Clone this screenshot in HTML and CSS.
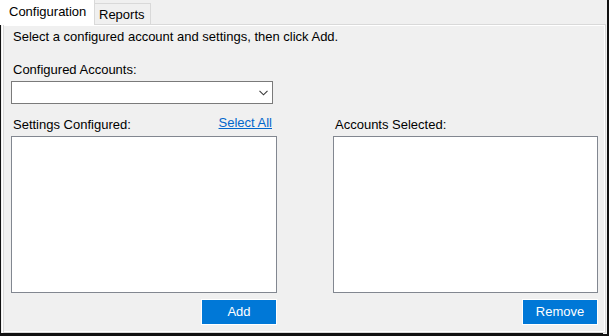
FILE: index.html
```html
<!DOCTYPE html>
<html>
<head>
<meta charset="utf-8">
<link rel="stylesheet" href="styles.css">
</head>
<body>
<div class="window">
  <div class="tabs">
    <div class="tab active">Configuration</div>
    <div class="tab">Reports</div>
  </div>
  <div class="panel">
    <div class="intro">Select a configured account and settings, then click Add.</div>
    <div class="label accounts-label">Configured Accounts:</div>
    <div class="combo">
      <svg class="chevron" width="9" height="6" viewBox="0 0 9 6"><polyline points="0.5,0.8 4.5,4.8 8.5,0.8" fill="none" stroke="#3a3a3a" stroke-width="1.1"/></svg>
    </div>
    <div class="cols">
      <div class="col-head">
        <span class="label">Settings Configured:</span>
        <span class="link">Select All</span>
      </div>
      <div class="col-head">
        <span class="label">Accounts Selected:</span>
      </div>
      <div class="list"></div>
      <div class="list"></div>
      <button class="btn">Add</button>
      <button class="btn">Remove</button>
    </div>
  </div>
</div>
</body>
</html>
```

FILE: styles.css
```css
html, body {
  margin: 0;
  padding: 0;
}
body {
  width: 609px;
  height: 336px;
  overflow: hidden;
  background: #f0f0f0;
  font-family: "Liberation Sans", Arial, sans-serif;
  font-size: 13px;
  color: #000;
}
.window {
  box-sizing: border-box;
  width: 609px;
  height: 336px;
  border-right: 2px solid #111;
  border-bottom: 2px solid #111;
  padding: 0 1px 0 3px;
  background: #f0f0f0;
}
.tabs {
  display: flex;
  align-items: flex-end;
  height: 24px;
  margin-left: -3px;
}
.tab {
  box-sizing: border-box;
  line-height: 16px;
  border: 1px solid #d9d9d9;
  border-bottom: none;
}
.tab.active {
  height: 25px;
  width: 95px;
  background: #fff;
  padding: 4px 0 0 9px;
  border-left: none;
  border-top: none;
  position: relative;
  z-index: 1;
  margin-bottom: -1px;
}
.tab:not(.active) {
  height: 21px;
  width: 56px;
  padding: 3px 0 0 4px;
  background: #f0f0f0;
  border-left: none;
}
.panel {
  box-sizing: border-box;
  height: 309px;
  border: 1px solid #d9d9d9;
  box-shadow: -1px 0 0 #fff, -2px 0 0 #f0f0f0, -3px 0 0 #111, -3px 3px 0 #111, inset -1px -1px 0 #fff, inset 0 1px 0 #fff;
  padding: 0 0 0 7px;
  background: #f0f0f0;
}
.intro {
  margin-top: 4px;
  line-height: 16px;
  padding-left: 2px;
}
.label {
  line-height: 16px;
  padding-left: 2px;
}
.accounts-label {
  display: block;
  margin-top: 17px;
}
.combo {
  box-sizing: border-box;
  margin-top: 3px;
  width: 262px;
  height: 23px;
  background: #fff;
  border: 1px solid #7a7a7a;
  display: flex;
  align-items: center;
  justify-content: flex-end;
  padding-right: 4px;
}
.chevron {
  display: block;
  margin-top: 1px;
}
.cols {
  display: grid;
  grid-template-columns: 266px 265px;
  column-gap: 56px;
  grid-template-rows: 19px 157px 32px;
  margin-top: 13px;
}
.col-head {
  display: flex;
  justify-content: space-between;
  align-items: flex-start;
  line-height: 16px;
}
.link {
  color: #0066cc;
  text-decoration: underline;
  margin-right: 5px;
  margin-top: -2px;
}
.list {
  box-sizing: border-box;
  background: #fff;
  border: 1px solid #828790;
}
.btn {
  justify-self: end;
  align-self: end;
  box-sizing: border-box;
  width: 76px;
  height: 26px;
  margin: 0;
  padding: 0;
  background: #0078d7;
  border: 1px solid #fff;
  color: #fff;
  font-family: "Liberation Sans", Arial, sans-serif;
  font-size: 13px;
  line-height: 16px;
}
```
